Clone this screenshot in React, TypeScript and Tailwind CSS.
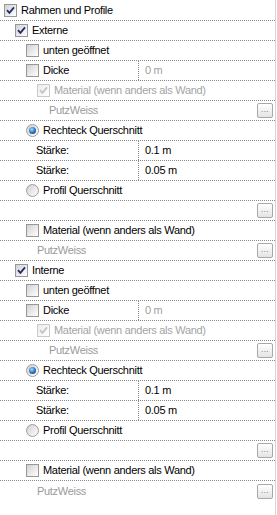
import React from 'react';

type Item =
  | { kind: 'check'; pad: number; label: string; checked?: boolean; disabled?: boolean; value?: string; valueMuted?: boolean; first?: boolean }
  | { kind: 'radio'; pad: number; label: string; checked?: boolean }
  | { kind: 'text'; pad: number; label: string; muted?: boolean; value?: string; button?: boolean }
  | { kind: 'empty'; button?: boolean };

const Check: React.FC<{ checked?: boolean; disabled?: boolean }> = ({ checked, disabled }) => (
  <span
    className={
      'w-[13px] h-[13px] shrink-0 flex items-center justify-center border ' +
      (disabled
        ? 'border-[#c9c9c9] bg-gradient-to-br from-[#ececec] to-white'
        : 'border-[#979797] bg-gradient-to-br from-[#d2d2d2] to-white')
    }
  >
    {checked && (
      <svg width="9" height="9" viewBox="0 0 9 9">
        <path
          d="M1 4.2 L3.4 6.8 L8 1.4"
          stroke={disabled ? '#c4c4c4' : '#1e2c6c'}
          strokeWidth="1.8"
          fill="none"
        />
      </svg>
    )}
  </span>
);

const Radio: React.FC<{ checked?: boolean }> = ({ checked }) => (
  <span className="w-[13px] h-[13px] shrink-0 rounded-full border border-[#9d9d9d] bg-gradient-to-br from-[#d0d0d0] to-white flex items-center justify-center">
    {checked && (
      <span className="w-[7px] h-[7px] rounded-full bg-[radial-gradient(circle_at_40%_35%,#9fdcff,#2a6fb8_55%,#0c2a55)]" />
    )}
  </span>
);

const Dots = () => (
  <span className="ml-auto mr-[2px] w-[16px] h-[15px] rounded-[2px] border border-[#a8a8a8] bg-gradient-to-b from-white to-[#e4e4e4] flex items-center justify-center text-[8px] leading-none text-[#555] tracking-[0.5px] pb-[1px]">
    ...
  </span>
);

const ValueCell: React.FC<{ value: string; muted?: boolean }> = ({ value, muted }) => (
  <span className={'pl-[6px] ' + (muted ? 'text-[#a0a0a0]' : 'text-black')}>{value}</span>
);

const rows: Item[] = [
  { kind: 'check', pad: 4, label: 'Rahmen und Profile', checked: true, first: true },
  { kind: 'check', pad: 15, label: 'Externe', checked: true },
  { kind: 'check', pad: 26, label: 'unten geöffnet' },
  { kind: 'check', pad: 26, label: 'Dicke', value: '0 m', valueMuted: true },
  { kind: 'check', pad: 37, label: 'Material (wenn anders als Wand)', checked: true, disabled: true },
  { kind: 'text', pad: 49, label: 'PutzWeiss', muted: true, button: true },
  { kind: 'radio', pad: 26, label: 'Rechteck Querschnitt', checked: true },
  { kind: 'text', pad: 36, label: 'Stärke:', value: '0.1 m' },
  { kind: 'text', pad: 36, label: 'Stärke:', value: '0.05 m' },
  { kind: 'radio', pad: 26, label: 'Profil Querschnitt' },
  { kind: 'empty', button: true },
  { kind: 'check', pad: 26, label: 'Material (wenn anders als Wand)' },
  { kind: 'text', pad: 37, label: 'PutzWeiss', muted: true, button: true },
  { kind: 'check', pad: 15, label: 'Interne', checked: true },
  { kind: 'check', pad: 26, label: 'unten geöffnet' },
  { kind: 'check', pad: 26, label: 'Dicke', value: '0 m', valueMuted: true },
  { kind: 'check', pad: 37, label: 'Material (wenn anders als Wand)', checked: true, disabled: true },
  { kind: 'text', pad: 49, label: 'PutzWeiss', muted: true, button: true },
  { kind: 'radio', pad: 26, label: 'Rechteck Querschnitt', checked: true },
  { kind: 'text', pad: 36, label: 'Stärke:', value: '0.1 m' },
  { kind: 'text', pad: 36, label: 'Stärke:', value: '0.05 m' },
  { kind: 'radio', pad: 26, label: 'Profil Querschnitt' },
  { kind: 'empty', button: true },
  { kind: 'check', pad: 26, label: 'Material (wenn anders als Wand)' },
  { kind: 'text', pad: 37, label: 'PutzWeiss', muted: true, button: true },
];

const RowContent: React.FC<{ item: Item }> = ({ item }) => {
  if (item.kind === 'empty') return <>{item.button && <Dots />}</>;

  let left: React.ReactNode;
  if (item.kind === 'check') {
    left = (
      <span className="flex items-center gap-[4px]" style={{ paddingLeft: item.pad }}>
        <Check checked={item.checked} disabled={item.disabled} />
        <span className={item.disabled ? 'text-[#a3a3a3]' : 'text-black'}>{item.label}</span>
      </span>
    );
  } else if (item.kind === 'radio') {
    left = (
      <span className="flex items-center gap-[4px]" style={{ paddingLeft: item.pad }}>
        <Radio checked={item.checked} />
        <span className="text-black">{item.label}</span>
      </span>
    );
  } else {
    left = (
      <span className={item.muted ? 'text-[#9a9a9a]' : 'text-black'} style={{ paddingLeft: item.pad }}>
        {item.label}
      </span>
    );
  }

  const value = item.kind === 'check' ? item.value : item.kind === 'text' ? item.value : undefined;
  if (value !== undefined) {
    return (
      <>
        <div className="w-[139px] h-full flex items-center border-r border-dotted border-[#8a8a8a] shrink-0">{left}</div>
        <ValueCell value={value} muted={item.kind === 'check' && item.valueMuted} />
      </>
    );
  }
  return (
    <>
      {left}
      {item.kind === 'text' && item.button && <Dots />}
    </>
  );
};

export default function App() {
  return (
    <div className="w-[277px] h-[515px] bg-white overflow-hidden font-['Liberation_Sans',Arial,sans-serif] text-[11px] tracking-[-0.3px] leading-none">
      <div className="w-[276px] h-full border-r border-[#d6d6d6]">
        {rows.map((item, i) => {
          const last = i === rows.length - 1;
          return (
            <div
              key={i}
              className={
                'flex items-center whitespace-nowrap ' +
                (i === 0 ? 'h-[21px] ' : 'h-5 ') +
                (last ? '' : 'border-b border-dotted border-[#8a8a8a]')
              }
            >
              <RowContent item={item} />
            </div>
          );
        })}
      </div>
    </div>
  );
}
